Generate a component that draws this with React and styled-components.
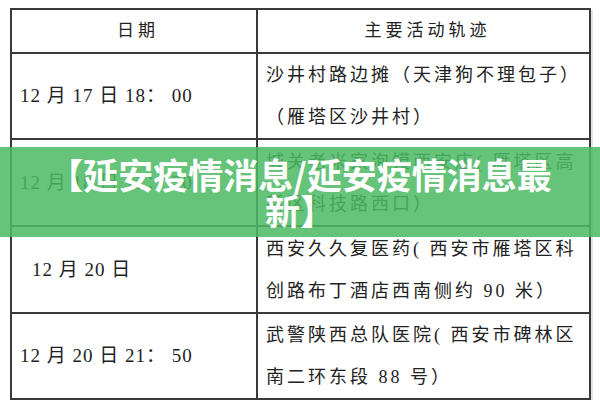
import styled, { createGlobalStyle } from "styled-components";

const Global = createGlobalStyle`
  body {
    margin: 0;
    background: #ffffff;
  }
`;

const Pagina = styled.div`
  position: relative;
  width: 600px;
  height: 400px;
  padding: 8px 9px 0 10px;
  box-sizing: border-box;
  overflow: hidden;
  background: #fff;
`;

const Tabla = styled.table`
  width: 581px;
  border-collapse: collapse;
  table-layout: fixed;
  box-shadow: 2px 2px 0 #e4e4e4;
  font-family: "Liberation Serif", "Noto Sans CJK SC", serif;
  color: #222;
`;

const Fila = styled.tr`
  height: ${(p) => p.$alto}px;
`;

const Celda = styled.td`
  border: 2px solid #3a3a3a;
  padding: 0 0 0 ${(p) => p.$sangria || 8}px;
  vertical-align: middle;
  text-align: ${(p) => (p.$centro ? "center" : "left")};
  font-size: ${(p) => (p.$fecha ? 19 : 18)}px;
  letter-spacing: ${(p) => (p.$fecha ? 1 : 3)}px;
  line-height: ${(p) => (p.$fecha ? 24 : 42)}px;
  font-weight: 400;
  white-space: nowrap;
  overflow: hidden;
`;

const Cabecera = styled(Celda)`
  font-size: 17px;
  letter-spacing: 4px;
  line-height: 20px;
`;

const Banda = styled.div`
  position: absolute;
  left: 0;
  right: 0;
  top: 147px;
  height: 90px;
  padding: 0 46px;
  box-sizing: border-box;
  display: flex;
  align-items: center;
  justify-content: center;
  background: rgba(76, 185, 100, 0.86);
`;

const Titulo = styled.h1`
  margin: 0;
  text-align: center;
  color: #ffffff;
  font-family: "Noto Sans CJK SC", "Noto Sans", sans-serif;
  font-weight: 700;
  font-size: 35px;
  line-height: 36px;
`;

const filas = [
  {
    alto: 84,
    fecha: "12 月 17 日 18： 00",
    lineas: ["沙井村路边摊（天津狗不理包子）", "（雁塔区沙井村）"],
  },
  {
    alto: 87,
    fecha: "12 月 18 日 12： 20",
    lineas: ["城关老米家泡馍西安店( 雁塔区高", "新区科技路西口）"],
  },
  {
    alto: 87,
    fecha: "12 月 20 日",
    sangria: 20,
    lineas: ["西安久久复医药( 西安市雁塔区科", "创路布丁酒店西南侧约 90 米）"],
  },
  {
    alto: 85,
    fecha: "12 月 20 日 21： 50",
    lineas: ["武警陕西总队医院( 西安市碑林区", "南二环东段 88 号）"],
  },
];

export default function App() {
  return (
    <>
      <Global />
      <Pagina>
        <Tabla>
          <colgroup>
            <col style={{ width: 246 }} />
            <col />
          </colgroup>
          <tbody>
            <Fila $alto={44}>
              <Cabecera $centro>日期</Cabecera>
              <Cabecera $centro>主要活动轨迹</Cabecera>
            </Fila>
            {filas.map((f) => (
              <Fila key={f.fecha} $alto={f.alto}>
                <Celda $fecha $sangria={f.sangria}>
                  {f.fecha}
                </Celda>
                <Celda $sangria={8}>
                  {f.lineas.map((l) => (
                    <div key={l}>{l}</div>
                  ))}
                </Celda>
              </Fila>
            ))}
          </tbody>
        </Tabla>
        <Banda>
          <Titulo>【延安疫情消息/延安疫情消息最新】</Titulo>
        </Banda>
      </Pagina>
    </>
  );
}
